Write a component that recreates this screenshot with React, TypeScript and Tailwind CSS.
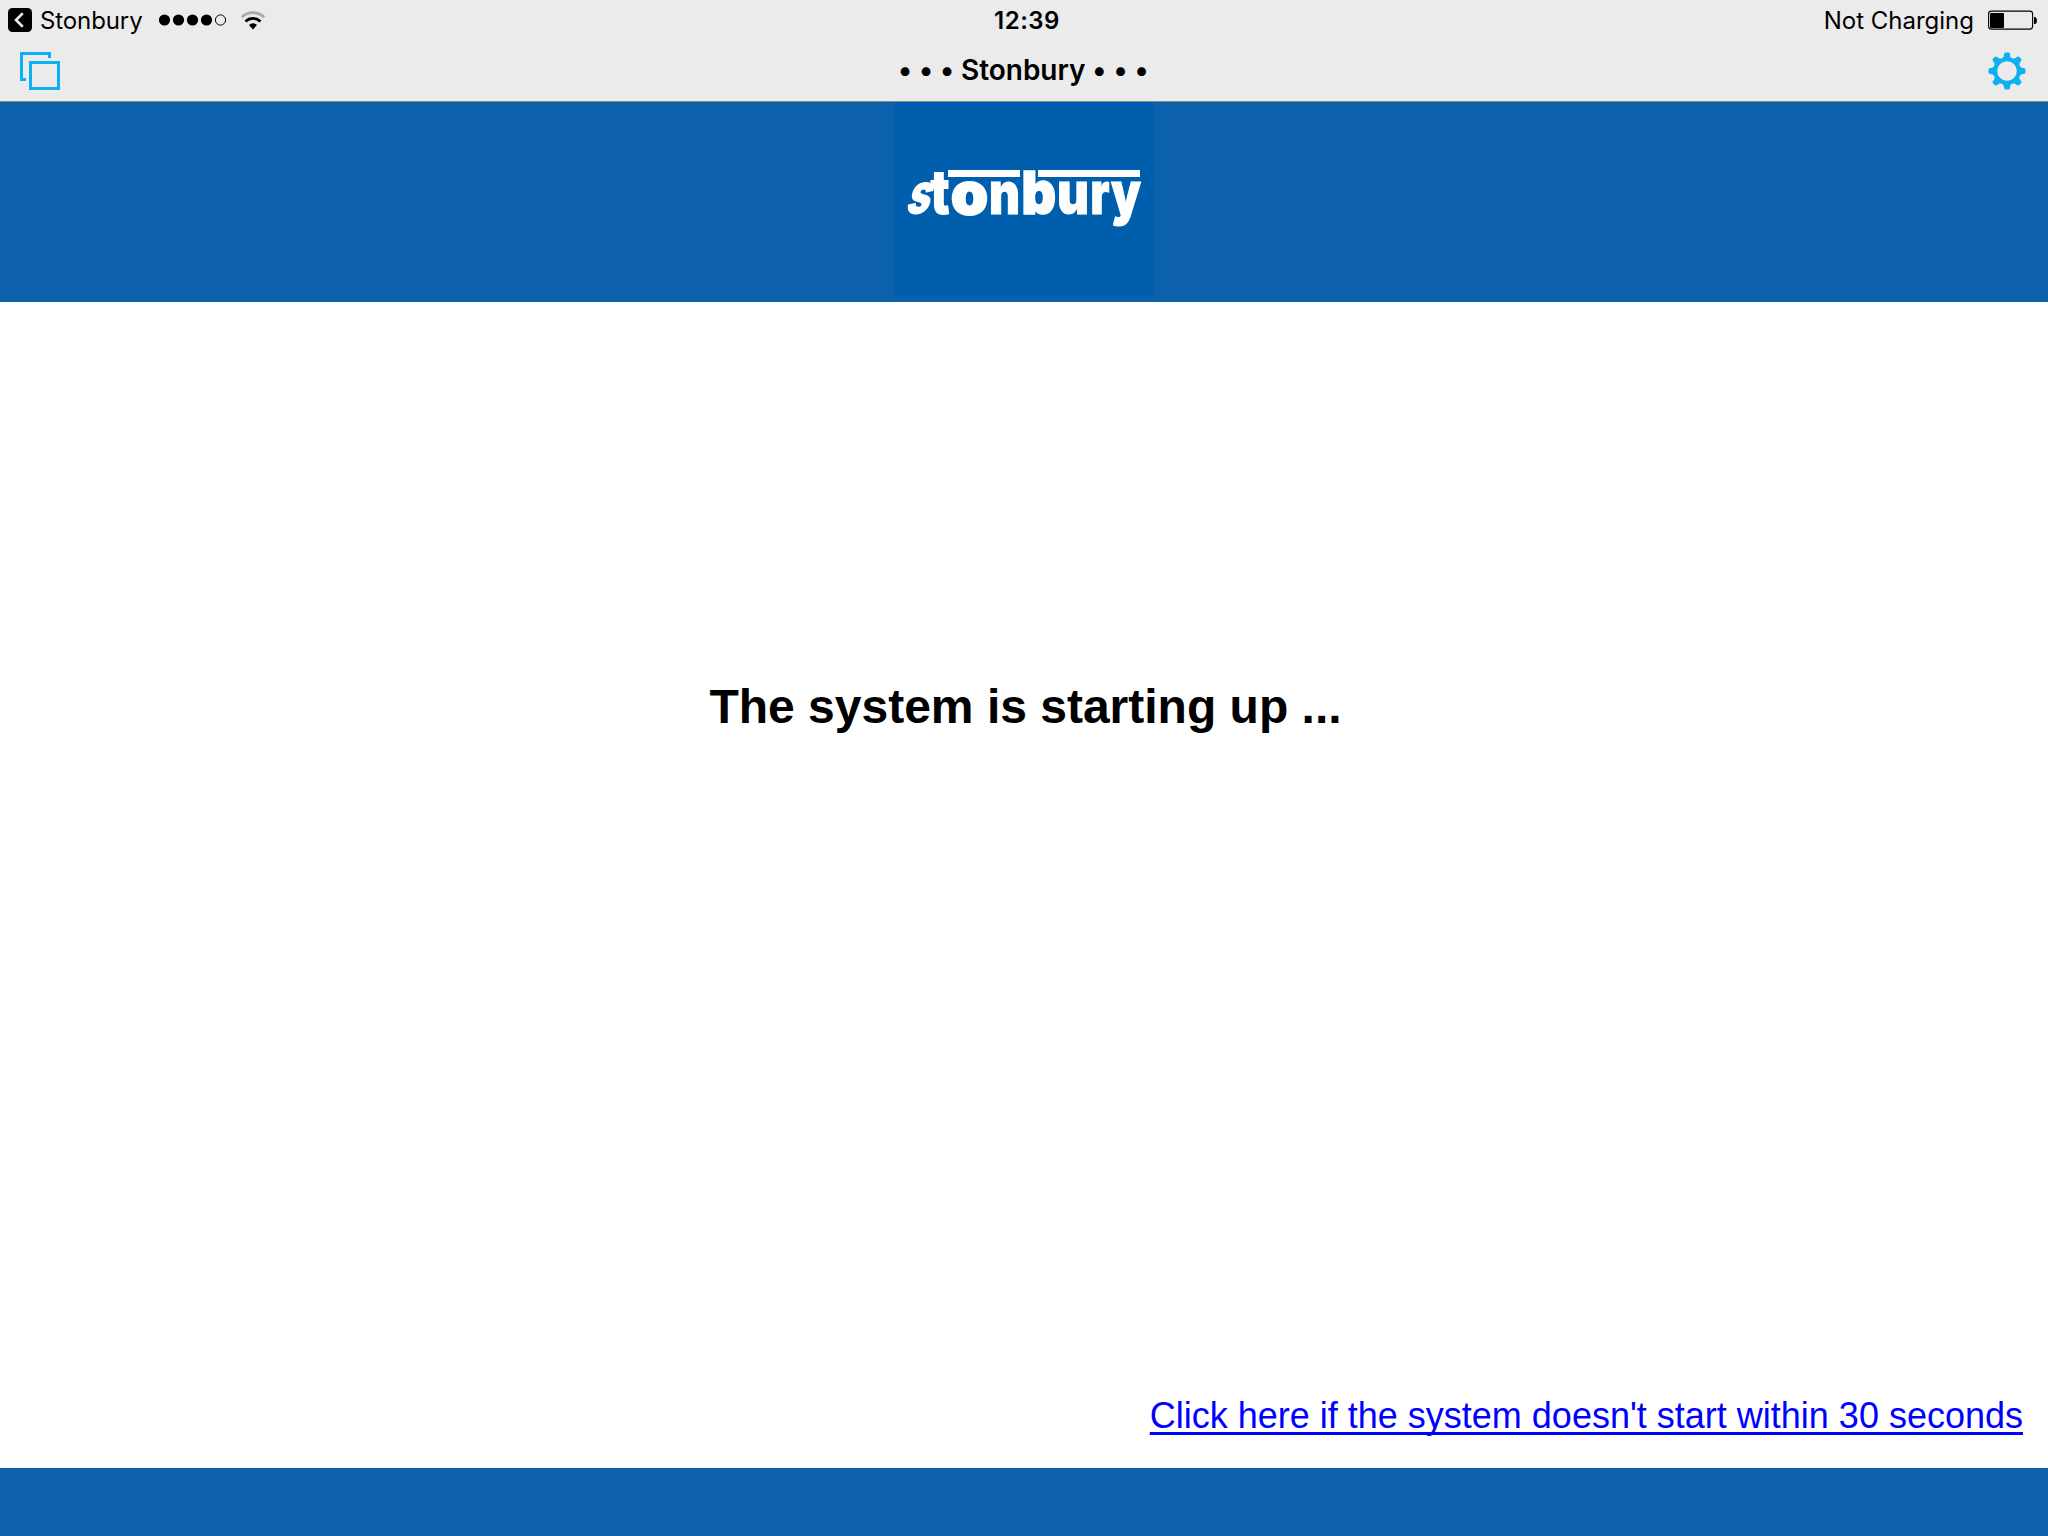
// ============================================
// Startup Screen
// ============================================

const signalDots = [6.5, 20.5, 34.5, 48.5];
const gearTeeth = [0, 45, 90, 135, 180, 225, 270, 315];

// One entry per letter of the wordmark: left edge, drawn width, transform and outline weight
const wordmark = [
  { char: 's', x: 10, width: 23.5, shape: 'skewX(-18)', weight: 0 },
  { char: 't', x: 36, width: 20, shape: 'scale(1 1.08)', weight: 0 },
  { char: 'o', x: 57, width: 37, shape: 'scale(1 1)', weight: 2 },
  { char: 'n', x: 95, width: 31, shape: 'scale(1 1)', weight: 1 },
  { char: 'b', x: 127.5, width: 34.5, shape: 'scale(1 1.02)', weight: 1.6 },
  { char: 'u', x: 163, width: 32, shape: 'scale(1 1)', weight: 1 },
  { char: 'r', x: 196.5, width: 19, shape: 'scale(1 1)', weight: 1 },
  { char: 'y', x: 217, width: 30, shape: 'scale(1 1)', weight: 1 },
];

function BackIcon() {
  return (
    <svg className="w-6 h-6" viewBox="0 0 24 24" fill="none">
      <rect width="24" height="24" rx="4.5" fill="#000" />
      <path d="M14.8 5.3 8 12l6.8 6.7" stroke="#ebebeb" strokeWidth="2.6" />
    </svg>
  );
}

function SignalIcon() {
  return (
    <svg className="w-[68px] h-3" viewBox="0 0 68 12">
      {signalDots.map((cx) => (
        <circle key={cx} cx={cx} cy="6" r="5.6" />
      ))}
      <circle cx="62.5" cy="6" r="5.1" fill="none" stroke="#000" strokeWidth="1" />
    </svg>
  );
}

function WifiIcon() {
  return (
    <svg className="w-[26px] h-[19px]" viewBox="0 0 26 19" fill="none">
      <path d="M1.8 6.2a16.2 16.2 0 0 1 22.4 0" stroke="#aaa" strokeWidth="2.8" />
      <path d="M5.5 10.5a10.8 10.8 0 0 1 15 0" stroke="#000" strokeWidth="2.8" />
      <path d="M9 14a5.7 5.7 0 0 1 8 0l-4 4.4Z" fill="#000" />
    </svg>
  );
}

function BatteryIcon() {
  return (
    <svg className="w-[50px] h-5" viewBox="0 0 50 20">
      <rect x="0.6" y="1.1" width="44" height="18" rx="2.8" fill="none" stroke="#000" strokeWidth="1.1" />
      <rect x="2" y="3" width="14" height="15" rx="1" />
      <path d="M46 7h1.2q1.8 1 1.8 3.5T47.2 14H46Z" />
    </svg>
  );
}

function WindowsIcon() {
  return (
    <svg className="w-10 h-[38px]" viewBox="0 0 40 38" fill="none" stroke="#0cb0f3" strokeWidth="3">
      <path d="M6 27.5H1.5v-26h28V6" />
      <rect x="10.5" y="10.5" width="28" height="26" />
    </svg>
  );
}

function GearIcon() {
  return (
    <svg className="w-[38px] h-[38px]" viewBox="-19 -19 38 38">
      <circle r="11.8" fill="none" stroke="#0cb0f3" strokeWidth="4" />
      {gearTeeth.map((angle) => (
        <path
          key={angle}
          d="M-4.9-12.4Q-3-13.6-2.8-17.3-2.6-18.5-1.6-18.5H1.6Q2.6-18.5 2.8-17.3 3-13.6 4.9-12.4Z"
          fill="#0cb0f3"
          transform={`rotate(${angle})`}
        />
      ))}
    </svg>
  );
}

function Logo() {
  return (
    <svg className="w-[260px] h-[196px] bg-[#005fad]" viewBox="0 0 260 196" fill="#fff">
      <rect x="54" y="68" width="72" height="7" />
      <rect x="144" y="68" width="102" height="7" />
      {wordmark.map((l) => (
        <text
          key={l.char}
          textLength={l.width}
          lengthAdjust="spacingAndGlyphs"
          stroke="#fff"
          strokeWidth={l.weight}
          transform={`translate(${l.x} 112) ${l.shape}`}
          className="font-['Inter',sans-serif] font-black text-[58px]"
        >
          {l.char}
        </text>
      ))}
    </svg>
  );
}

export default function App() {
  return (
    <div className="flex flex-col w-[2048px] h-[1536px] overflow-hidden bg-white text-black">
      {/* Status Bar */}
      <header className="h-[102px] shrink-0 bg-[#ebebeb] border-b border-[#8b8b8b] font-['Inter',sans-serif]">
        <div className="grid grid-cols-3 h-10 items-center pl-2 pr-[10px] text-2xl">
          <div className="flex items-center">
            <BackIcon />
            <span className="ml-2 w-[118px] pt-0.5 whitespace-nowrap tracking-[-0.1px]">Stonbury</span>
            <SignalIcon />
            <span className="ml-[13.5px]"><WifiIcon /></span>
          </div>
          <span className="text-center font-semibold pl-[8px] pt-0.5 tracking-[0.5px]">12:39</span>
          <div className="flex items-center justify-end gap-[14px]">
            <span className="pt-0.5">Not Charging</span>
            <BatteryIcon />
          </div>
        </div>

        {/* Title Bar */}
        <div className="grid grid-cols-3 h-[61px] items-center pl-5 pr-[21.5px]">
          <WindowsIcon />
          <h1 className="text-center whitespace-nowrap text-[28px] font-semibold pb-px tracking-[-0.05px] [font-feature-settings:'calt'_0]">
            • • • Stonbury • • •
          </h1>
          <div className="flex justify-end">
            <GearIcon />
          </div>
        </div>
      </header>

      {/* Brand Banner */}
      <div className="flex justify-center h-[200px] shrink-0 bg-[#0d61aa]">
        <Logo />
      </div>

      {/* Startup Message */}
      <main className="flex flex-1 flex-col justify-between font-['Liberation_Sans',Arial,sans-serif]">
        <p className="pt-[381px] pl-[3px] text-center text-5xl font-bold">The system is starting up ...</p>
        <div className="flex justify-end pr-[25px] pb-8">
          <a href="#" className="text-4xl text-[#0000ff] underline decoration-[3px] underline-offset-[4px] [text-decoration-skip-ink:none]">
            Click here if the system doesn't start within 30 seconds
          </a>
        </div>
      </main>

      <footer className="h-[68px] shrink-0 bg-[#0d61aa]" />
    </div>
  );
}
